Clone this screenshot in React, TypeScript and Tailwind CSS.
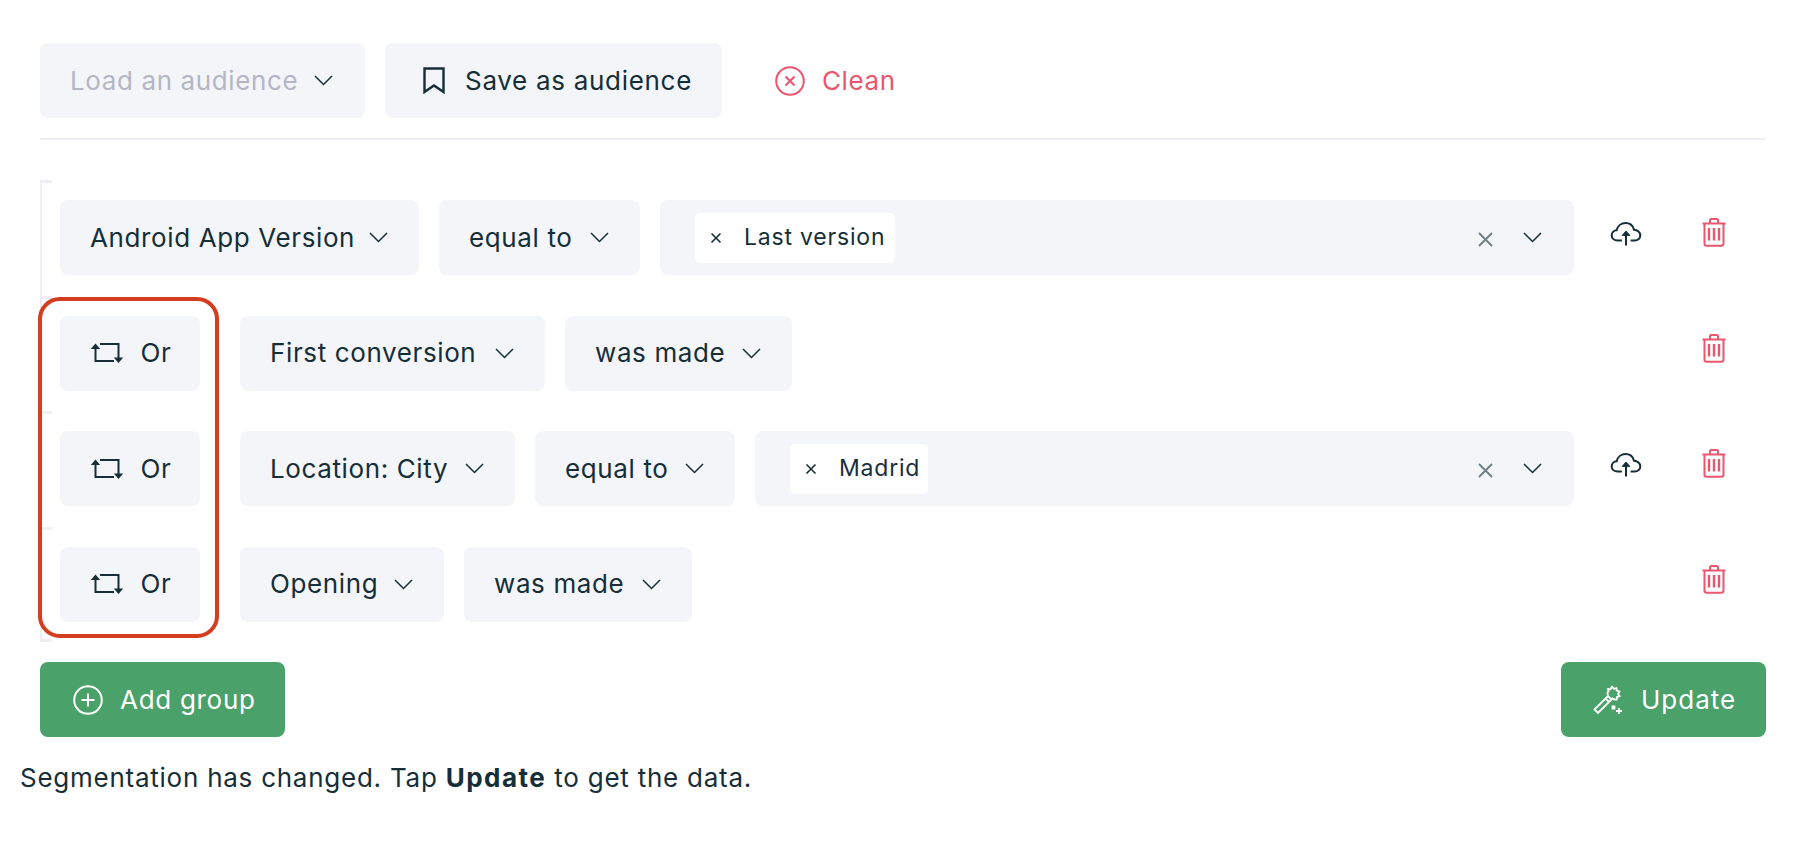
import React from "react";

const Chevron = ({ className = "" }: { className?: string }) => (
  <svg width="19" height="11" viewBox="0 0 19 11" fill="none" stroke="currentColor" strokeWidth="1.5" className={`shrink-0 ${className}`}>
    <path d="M1 1l8.5 8.5L18 1" />
  </svg>
);

const Trash = () => (
  <svg width="24" height="29" viewBox="0 0 24 29" fill="none" stroke="#e9566e" strokeWidth="2">
    <path d="M0.5 5.5h23" />
    <path d="M8 5V2.2C8 1.5 8.5 1 9.2 1h5.6c.7 0 1.2.5 1.2 1.2V5" />
    <path d="M2.5 6v19.5c0 1.4.9 2.3 2.3 2.3h14.4c1.4 0 2.3-.9 2.3-2.3V6" />
    <path d="M7 10v12.5M12 10v12.5M17 10v12.5" strokeWidth="2.4" />
  </svg>
);

const Cloud = () => (
  <svg width="32" height="24" viewBox="0 0 34 26" fill="none" stroke="#152e37" strokeWidth="2.2">
    <path d="M12.5 20H8C4 20 1.5 17.6 1.5 14.5c0-3 2.2-5.3 5.4-5.5C8 4.3 12 1.2 16.5 1.2c4.4 0 8 2.8 9.2 7.2 3.8.2 6.8 2.8 6.8 6 0 3.2-2.6 5.6-6 5.6h-4.5" />
    <path d="M17 25.5V11" />
    <path d="M12.8 14.5L17 9.8l4.2 4.7z" fill="#152e37" strokeWidth="1" />
  </svg>
);

const Swap = () => (
  <svg width="34" height="22" viewBox="0 0 34 22" fill="none" stroke="#152e37" strokeWidth="2">
    <path d="M5.5 3v16H24" />
    <path d="M10 2h18.5v16" />
    <path d="M0.8 7L5.5 1.5 10.2 7z" fill="#152e37" stroke="none" />
    <path d="M23.8 15.5l4.7 5.5 4.7-5.5z" fill="#152e37" stroke="none" />
  </svg>
);

const Wand = () => (
  <svg width="31" height="31" viewBox="0 0 31 31" fill="none" stroke="#fff" strokeWidth="1.8">
    <path d="M1.5 25.5L15 12l3.5 3.5L5 29z" />
    <path d="M12.5 14.5l3.5 3.5" />
    <path d="M15 11c-1-2-.5-3 .5-3.5L15 5l2.5.3L19 2.5l2 2.3 2.5-.8.2 2.7 3 .8-1.7 2.4 1.8 2.3-2.8.7-.2 2.7c-2 .2-3.5-.3-5-1.6" strokeLinejoin="round" />
    <path d="M19.5 22.5h2v2h-2z" fill="#fff" />
    <path d="M26 24v6M23 27h6" />
  </svg>
);

const Btn = ({ className = "", children }: { className?: string; children: React.ReactNode }) => (
  <div className={`flex h-[75px] shrink-0 items-center rounded-[8px] bg-[#f3f5f9] ${className}`}>{children}</div>
);

const Select = ({ label, width }: { label: string; width: string }) => (
  <Btn className={`${width} justify-between pl-[30px] pr-[31px]`}>
    <span className="whitespace-nowrap">{label}</span>
    <Chevron className="text-[#152e37]" />
  </Btn>
);

const ValueBox = ({ tag, tagWidth }: { tag: string; tagWidth: string }) => (
  <Btn className="h-[74px] min-w-0 flex-1 shrink pl-[35px] pr-[32px]">
    <div className={`flex h-[50px] items-center rounded-[5px] bg-white pl-[14px] text-[23px] tracking-[0.8px] ${tagWidth}`}>
      <svg width="12" height="12" viewBox="0 0 12 12" stroke="#152e37" strokeWidth="1.6" className="mr-[22px] ml-[1px] shrink-0">
        <path d="M1.5 1.5l9 9M10.5 1.5l-9 9" />
      </svg>
      <span className="whitespace-nowrap">{tag}</span>
    </div>
    <div className="flex-1" />
    <svg width="15" height="15" viewBox="0 0 15 15" stroke="#6f7f86" strokeWidth="1.9" className="mt-1 mr-[30px] shrink-0">
      <path d="M1 1l13 13M14 1L1 14" />
    </svg>
    <Chevron className="mb-[1px] text-[#152e37]" />
  </Btn>
);

const Or = () => (
  <Btn className="mr-[20px] w-[140px] justify-center gap-[17px] pl-[1px]">
    <Swap />
    <span>Or</span>
  </Btn>
);

const Actions = ({ cloud }: { cloud?: boolean }) => (
  <div className="flex w-[172px] shrink-0 items-start">
    <div className="flex w-[64px] shrink-0 justify-center pt-[22px]">{cloud ? <Cloud /> : null}</div>
    <div className="pl-[44px] pt-[18px]">
      <Trash />
    </div>
  </div>
);

const Row = ({ children, last }: { children: React.ReactNode; last?: boolean }) => (
  <div className="relative flex h-[115.5px] gap-[20px] border-l-2 border-[#eeeff4] pl-[18px] pt-[20px]">
    <span className="absolute -left-[2px] top-0 h-[3px] w-[12px] bg-[#eeeff4]" />
    {last ? <span className="absolute -left-[2px] bottom-0 h-[3px] w-[12px] bg-[#eeeff4]" /> : null}
    {children}
  </div>
);

export default function App() {
  return (
    <div
      className="relative min-h-[852px] bg-white pl-[40px] pr-[52px] pt-[43px] text-[26px] leading-none tracking-[0.62px] text-[#152e37]"
      style={{ fontFamily: "Inter, 'Noto Sans', sans-serif" }}
    >
      <div className="flex items-center gap-[20px] border-b-2 border-[#eeeff4] pb-[20px]">
        <Btn className="w-[325px] justify-between pl-[30px] pr-[32px] text-[#b5b6c4]">
          <span className="whitespace-nowrap">Load an audience</span>
          <Chevron className="text-[#152e37]" />
        </Btn>
        <Btn className="w-[337px] gap-[20px] pl-[38px]">
          <svg width="22" height="27" viewBox="0 0 22 27" fill="none" stroke="#152e37" strokeWidth="2.4" className="shrink-0">
            <path d="M1.5 1.5h19v23.5L11 18.5 1.5 25z" />
          </svg>
          <span className="whitespace-nowrap tracking-[0.7px]">Save as audience</span>
        </Btn>
        <div className="ml-[33px] flex items-center gap-[17px] text-[#e9566e]">
          <svg width="30" height="30" viewBox="0 0 30 30" fill="none" stroke="#e9566e" strokeWidth="2">
            <circle cx="15" cy="15" r="13.8" />
            <path d="M10.5 10.5l9 9M19.5 10.5l-9 9" />
          </svg>
          <span>Clean</span>
        </div>
      </div>

      <div className="mt-[40px]">
        <Row>
          <Select label="Android App Version" width="w-[359px]" />
          <Select label="equal to" width="w-[201px]" />
          <ValueBox tag="Last version" tagWidth="w-[200px]" />
          <Actions cloud />
        </Row>
        <Row>
          <Or />
          <Select label="First conversion" width="w-[305px]" />
          <Select label="was made" width="w-[227px]" />
          <div className="flex-1" />
          <Actions />
        </Row>
        <Row>
          <Or />
          <Select label="Location: City" width="w-[275px]" />
          <Select label="equal to" width="w-[200px]" />
          <ValueBox tag="Madrid" tagWidth="w-[138px]" />
          <Actions cloud />
        </Row>
        <Row last>
          <Or />
          <Select label="Opening" width="w-[204px]" />
          <Select label="was made" width="w-[228px]" />
          <div className="flex-1" />
          <Actions />
        </Row>
      </div>

      <div className="mt-[20px] flex justify-between text-white">
        <div className="flex h-[75px] w-[245px] items-center gap-[17px] rounded-[8px] bg-[#4aa169] pl-[33px]">
          <svg width="30" height="30" viewBox="0 0 30 30" fill="none" stroke="#fff" strokeWidth="2">
            <circle cx="15" cy="15" r="13.8" />
            <path d="M15 8.5v13M8.5 15h13" />
          </svg>
          <span className="whitespace-nowrap tracking-[0.7px]">Add group</span>
        </div>
        <div className="flex h-[75px] w-[205px] items-center gap-[17px] rounded-[8px] bg-[#4aa169] pl-[32px]">
          <Wand />
          <span className="tracking-[1px]">Update</span>
        </div>
      </div>

      <p className="-ml-[20px] mt-[28px] tracking-[0.75px]">
        Segmentation has changed. Tap <b className="font-bold tracking-[1.5px]">Update</b> to get the data.
      </p>

      <div className="pointer-events-none absolute left-[38px] top-[297px] h-[341px] w-[181px] rounded-[22px] border-[4.5px] border-[#d43d1f]" />
    </div>
  );
}
